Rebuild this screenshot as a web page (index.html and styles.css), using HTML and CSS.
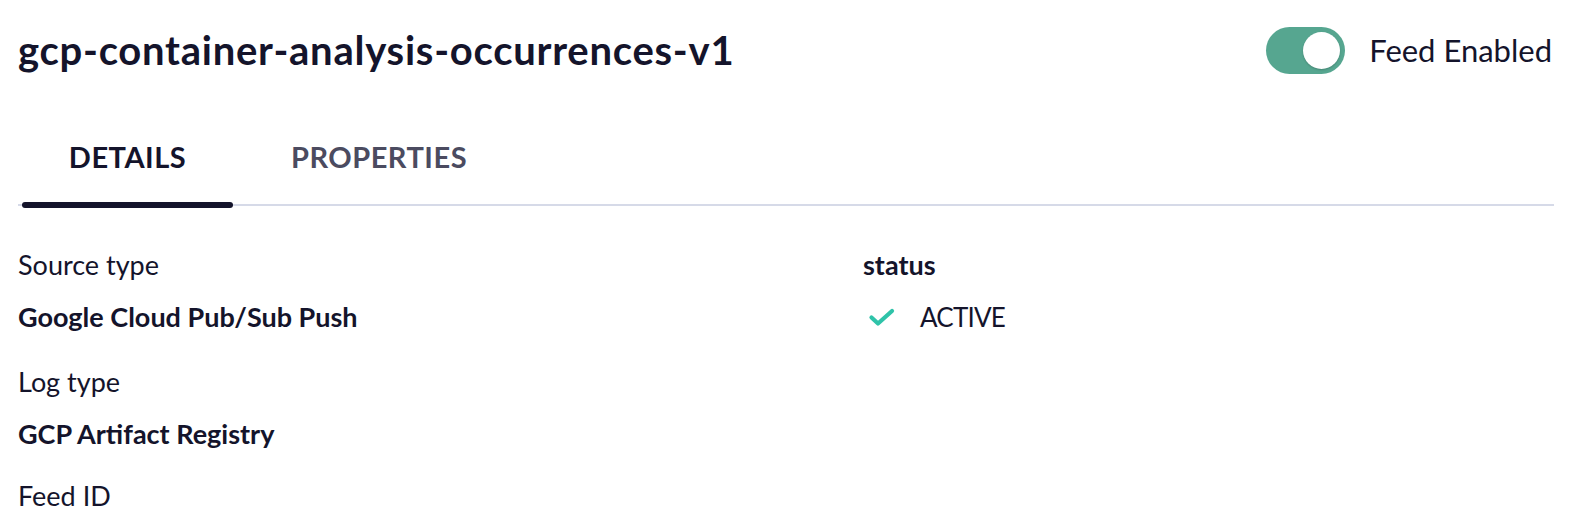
FILE: index.html
```html
<!DOCTYPE html>
<html>

<head>
    <meta charset="UTF-8">
    <title>gcp-container-analysis-occurrences-v1</title>
    <link rel="stylesheet" href="styles.css">
</head>

<body>
    <div class="page">
        <div class="header">
            <h1 class="title">gcp-container-analysis-occurrences-v1</h1>
            <label class="feed-toggle">
                <span class="switch"><span class="knob"></span></span>
                <span class="switch-text">Feed Enabled</span>
            </label>
        </div>

        <div class="tabs">
            <a class="tab active" href="javascript:;">DETAILS</a>
            <a class="tab" href="javascript:;">PROPERTIES</a>
        </div>

        <div class="details">
            <div class="col">
                <div class="field">
                    <div class="label">Source type</div>
                    <div class="value">Google Cloud Pub/Sub Push</div>
                </div>
                <div class="field">
                    <div class="label">Log type</div>
                    <div class="value">GCP Artifact Registry</div>
                </div>
                <div class="field">
                    <div class="label">Feed ID</div>
                </div>
            </div>
            <div class="col">
                <div class="field">
                    <div class="label strong">status</div>
                    <div class="status">
                        <svg class="check" width="28" height="22" viewBox="0 0 28 22">
                            <path d="M3.5 11.5 L10 17.5 L24 5" fill="none" stroke="#2fc3a9" stroke-width="4.2" stroke-linecap="round" stroke-linejoin="round"/>
                        </svg>
                        <span>ACTIVE</span>
                    </div>
                </div>
            </div>
        </div>
    </div>
</body>

</html>
```

FILE: styles.css
```css
* {
    margin: 0;
    padding: 0;
    box-sizing: border-box;
}

body {
    font-family: Lato, "Liberation Sans", sans-serif;
    color: #14142b;
    background: #fff;
}

.page {
    padding: 0 20px 0 18px;
}

.header {
    height: 100px;
    display: flex;
    align-items: center;
    justify-content: space-between;
}

.title {
    font-size: 40px;
    font-weight: 700;
    line-height: 48px;
    letter-spacing: 0.75px;
}

.feed-toggle {
    display: flex;
    align-items: center;
    gap: 24px;
    margin-right: 2px;
}

.switch {
    width: 79px;
    height: 47px;
    border-radius: 24px;
    background-color: #56a690;
    display: flex;
    align-items: center;
    justify-content: flex-end;
    padding-right: 5px;
}

.knob {
    width: 37px;
    height: 37px;
    border-radius: 50%;
    background: #fff;
    box-shadow: 0 1px 2px rgba(0, 0, 0, 0.2);
}

.switch-text {
    font-size: 31px;
    line-height: 40px;
}

.tabs {
    display: flex;
    border-bottom: 2px solid #d6dae8;
    padding-left: 4px;
}

.tab {
    position: relative;
    display: block;
    padding: 37px 0 27px;
    font-size: 29px;
    line-height: 40px;
    font-weight: 700;
    letter-spacing: 0.5px;
    text-decoration: none;
    text-align: center;
    color: #4b4b60;
}

.tab:first-child {
    width: 211px;
}

.tab + .tab {
    padding-left: 58px;
}

.tab.active {
    color: #14142b;
}

.tab.active::after {
    content: "";
    position: absolute;
    left: 0;
    right: 0;
    bottom: -4px;
    height: 6px;
    border-radius: 3px;
    background: #14142b;
}

.details {
    display: grid;
    grid-template-columns: 845px 1fr;
    padding-top: 39px;
}

.field {
    margin-bottom: 22px;
}

.field:first-child {
    margin-bottom: 25px;
}

.label {
    font-size: 27px;
    line-height: 40px;
    margin-bottom: 12px;
}

.label.strong {
    font-weight: 700;
}

.value {
    font-size: 27px;
    line-height: 40px;
    font-weight: 700;
}

.status {
    display: flex;
    align-items: center;
    height: 40px;
    padding-left: 5px;
    font-size: 26px;
}

.status span {
    margin-left: 24px;
    letter-spacing: -0.8px;
}
```
